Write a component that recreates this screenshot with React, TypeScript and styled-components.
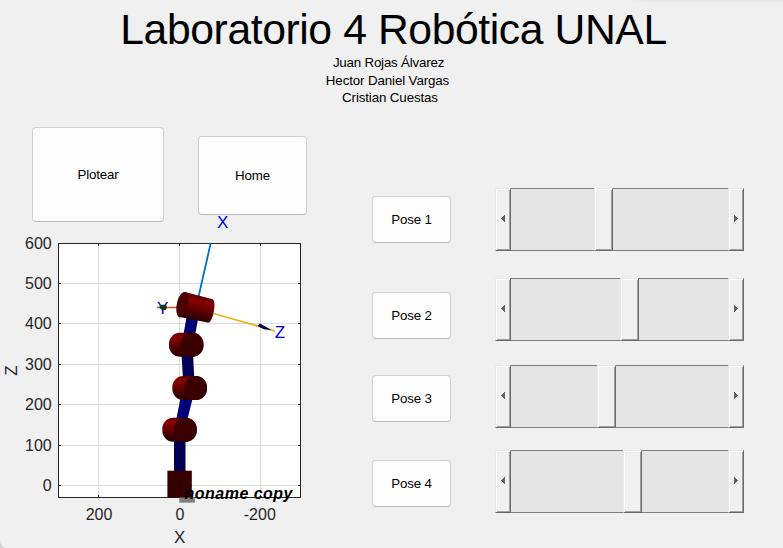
import React from "react";
import styled, { createGlobalStyle } from "styled-components";

const GlobalStyle = createGlobalStyle`
  *, *::before, *::after { box-sizing: border-box; }
  html, body { margin: 0; background: #d0d0d0; }
  body { font-family: "Liberation Sans", Arial, sans-serif; color: #000; overflow: hidden; }
`;

const Window = styled.div`
  width: 783px;
  height: 548px;
  display: flex;
  flex-direction: column;
  background: #f0f0f0;
  border-bottom-left-radius: 7px;
  overflow: hidden;
`;

const Header = styled.header`
  height: 127px;
  display: flex;
  flex-direction: column;
  align-items: center;
  background: linear-gradient(90deg, transparent, #e9e9e9 12%) 100% 0 / 155px 2px no-repeat;
`;

const Title = styled.h1`
  margin: 5px 0 0 4px;
  height: 49px;
  font-size: 42.67px;
  font-weight: 400;
  line-height: 49px;
  white-space: nowrap;
  letter-spacing: -0.4px;
`;

const Author = styled.div<{ $shift: number; $spacing: number }>`
  height: 17.6px;
  line-height: 17.6px;
  font-size: 13.33px;
  letter-spacing: ${(p) => p.$spacing}px;
  margin-left: ${(p) => p.$shift}px;
  white-space: nowrap;
`;

const Body = styled.main`
  flex: 1;
  display: flex;
`;

const LeftPane = styled.section`
  width: 372px;
  display: flex;
  flex-direction: column;
`;

const ActionRow = styled.div`
  display: flex;
  gap: 34px;
  padding-left: 32px;
  height: 95px;
`;

const Button = styled.button<{ $w: number; $h: number; $top?: number }>`
  width: ${(p) => p.$w}px;
  height: ${(p) => p.$h}px;
  margin: ${(p) => p.$top ?? 0}px 0 0;
  padding: 0;
  border: 1px solid #d0d0d0;
  border-bottom-color: #bababa;
  border-radius: 4px;
  background: #fdfdfd;
  color: #000;
  font: 13.33px "Liberation Sans", Arial, sans-serif;
  letter-spacing: -0.15px;
`;

const Plot = styled.svg`
  display: block;
  overflow: visible;
  font-family: "Liberation Sans", Arial, sans-serif;
`;

const RightPane = styled.section`
  display: flex;
  flex-direction: column;
  padding-top: 61px;
`;

const PoseRow = styled.div<{ $h: number }>`
  display: flex;
  align-items: flex-start;
  gap: 44px;
  height: ${(p) => p.$h}px;
`;

const ScrollBar = styled.div`
  display: flex;
  width: 249px;
  height: 63px;
`;

const Raised = styled.div<{ $w: number }>`
  flex: none;
  width: ${(p) => p.$w}px;
  height: 63px;
  display: flex;
  align-items: center;
  justify-content: center;
  padding-bottom: 2px;
  background: #f0f0f0;
  border: 1px solid;
  border-color: #e9e9e9 #696969 #696969 #e9e9e9;
  box-shadow: inset 1px 1px 0 #fff, inset -1px -1px 0 #a0a0a0;
`;

const Track = styled.div<{ $w?: number }>`
  ${(p) => (p.$w ? `flex: none; width: ${p.$w}px;` : "flex: 1;")}
  background: #e5e5e5;
  border-top: 1px solid #808080;
  border-bottom: 1px solid #808080;
`;

const Arrow = styled.svg`
  display: block;
`;

function Slider({ before }: { before: number }) {
  return (
    <ScrollBar>
      <Raised $w={16}>
        <Arrow width="4" height="7" shapeRendering="crispEdges">
          <path d="M4 0V7H3V6H2V5H1V4H0V3H1V2H2V1H3V0Z" fill="#606060" />
        </Arrow>
      </Raised>
      <Track $w={before} />
      <Raised $w={19} />
      <Track />
      <Raised $w={16}>
        <Arrow width="4" height="7" shapeRendering="crispEdges">
          <path d="M0 0V7H1V6H2V5H3V4H4V3H3V2H2V1H1V0Z" fill="#606060" />
        </Arrow>
      </Raised>
    </ScrollBar>
  );
}

const poses = [
  { label: "Pose 1", height: 90, offset: 8, before: 83 },
  { label: "Pose 2", height: 87, offset: 14, before: 109 },
  { label: "Pose 3", height: 85, offset: 10, before: 86 },
  { label: "Pose 4", height: 63, offset: 10, before: 112 },
];

const zTicks = [
  { v: "600", y: 243.5 },
  { v: "500", y: 283.5 },
  { v: "400", y: 323.5 },
  { v: "300", y: 364.5 },
  { v: "200", y: 404.5 },
  { v: "100", y: 445.5 },
  { v: "0", y: 485.5 },
];

const xTicks = [
  { v: "200", x: 98.5 },
  { v: "0", x: 179.5 },
  { v: "-200", x: 260.5 },
];

function Joint({ left, right, y }: { left: number; right: number; y: number }) {
  return (
    <g>
      <rect x={left} y={y - 12} width={right - left} height="24" rx="11" fill="url(#side)" />
      <ellipse cx={right - 11.5} cy={y} rx="11.5" ry="12" fill="#3a0000" />
    </g>
  );
}

function RobotPlot() {
  return (
    <Plot width="320" height="326" viewBox="0 222 320 326">
      <defs>
        <linearGradient id="side" x1="0" y1="0" x2="0" y2="1">
          <stop offset="0" stopColor="#500000" />
          <stop offset="0.15" stopColor="#8c0000" />
          <stop offset="0.5" stopColor="#640000" />
          <stop offset="0.75" stopColor="#3c0000" />
          <stop offset="1" stopColor="#2c0000" />
        </linearGradient>
        <linearGradient id="wrist" x1="200" y1="295" x2="194" y2="320" gradientUnits="userSpaceOnUse">
          <stop offset="0" stopColor="#520000" />
          <stop offset="0.25" stopColor="#8a0000" />
          <stop offset="0.55" stopColor="#600000" />
          <stop offset="1" stopColor="#280000" />
        </linearGradient>
      </defs>

      <rect x="58" y="243" width="243" height="255" fill="#fff" />
      <g stroke="#dbdbdb" strokeWidth="1" shapeRendering="crispEdges">
        {zTicks.slice(1).map((t) => (
          <line key={t.v} x1="59" x2="300" y1={t.y} y2={t.y} />
        ))}
        {xTicks.map((t) => (
          <line key={t.v} x1={t.x} x2={t.x} y1="244" y2="497" />
        ))}
      </g>
      <g stroke="#262626" strokeWidth="1" fill="none" shapeRendering="crispEdges">
        <rect x="58.5" y="243.5" width="242" height="254" />
        {zTicks.map((t) => (
          <path key={t.v} d={`M59 ${t.y}h2M298 ${t.y}h2`} />
        ))}
        {xTicks.map((t) => (
          <path key={t.v} d={`M${t.x} 244v2M${t.x} 495v2`} />
        ))}
      </g>

      <g fontSize="16" fill="#262626">
        {zTicks.map((t) => (
          <text key={t.v} x="51.7" y={t.y + 5.6} textAnchor="end">{t.v}</text>
        ))}
        {xTicks.map((t) => (
          <text key={t.v} x={t.x + (t.v === "-200" ? -0.7 : 0.5)} y="520" textAnchor="middle">{t.v}</text>
        ))}
        <text x="179.7" y="543" fontSize="17" textAnchor="middle">X</text>
        <text transform="translate(17 370.5) rotate(-90)" fontSize="17" textAnchor="middle">Z</text>
      </g>

      <text x="217" y="227.5" fontSize="17" fill="#0000ff">X</text>
      <path d="M210.7 243L198.5 297" stroke="#0072bd" strokeWidth="1.8" />
      <path d="M157 307.5H178" stroke="#d95319" strokeWidth="1.5" />
      <path d="M212 313L275 331" stroke="#edb120" strokeWidth="1.8" />
      <text x="157" y="313.5" fontSize="17" fill="#0000ff">Y</text>
      <path d="M159 307L161.5 304.8L166 304.8L167 307.5L165.5 310.3L161.5 309.8Z" fill="#123c12" />
      <path d="M257.5 326L260 323.5L271.5 330L264 329.2Z" fill="#000048" />
      <text x="274.7" y="337.5" fontSize="17" fill="#0000ff">Z</text>

      <rect x="174" y="440" width="11.5" height="32" fill="#000052" />
      <path d="M181 396L192.5 399L187.5 419H176.3Z" fill="#000078" />
      <path d="M181.5 355L193 354L194.3 378.5H183Z" fill="#000058" />
      <path d="M187 315H198.7L195.3 334H183.5Z" fill="#000060" />
      <path d="M189 316L196 317L191.5 334L184 333Z" fill="#00007a" />

      <Joint left={162.3} right={196.8} y={429.8} />
      <Joint left={172.3} right={207} y={388} />
      <Joint left={169} right={203.5} y={344.7} />

      <path d="M185 292L212.7 299.3C215.5 302 214.5 309 213 315C211.3 321 209.5 323 207.5 322.6L180 317Z" fill="url(#wrist)" />
      <path d="M185 292C181 291.5 177 299 176.4 307C176 313 177.3 317.2 180 317.4C184 317.4 188 308 188.3 300C188.4 295 187.5 292.5 185 292Z" fill="#4a0000" />

      <rect x="179.3" y="497" width="15.7" height="5.7" fill="#808080" />
      <rect x="167.4" y="470.7" width="24.4" height="26.8" fill="#360000" />
      <path d="M179.5 471V497M168 485.5H191.5" stroke="#2b0000" />
      <text x="184.5" y="498.6" fontSize="16" fontWeight="bold" fontStyle="italic" fill="#000" textLength="108" lengthAdjust="spacing">noname copy</text>
    </Plot>
  );
}

export default function App() {
  return (
    <>
      <GlobalStyle />
      <Window>
        <Header>
          <Title>Laboratorio 4 Robótica UNAL</Title>
          <Author $shift={-6} $spacing={-0.2}>Juan Rojas Álvarez</Author>
          <Author $shift={-8} $spacing={-0.12}>Hector Daniel Vargas</Author>
          <Author $shift={-3} $spacing={-0.12}>Cristian Cuestas</Author>
        </Header>
        <Body>
          <LeftPane>
            <ActionRow>
              <Button $w={132} $h={95}>Plotear</Button>
              <Button $w={109} $h={79} $top={9}>Home</Button>
            </ActionRow>
            <RobotPlot />
          </LeftPane>
          <RightPane>
            {poses.map((p) => (
              <PoseRow key={p.label} $h={p.height}>
                <Button $w={79} $h={47} $top={p.offset}>{p.label}</Button>
                <Slider before={p.before} />
              </PoseRow>
            ))}
          </RightPane>
        </Body>
      </Window>
    </>
  );
}
